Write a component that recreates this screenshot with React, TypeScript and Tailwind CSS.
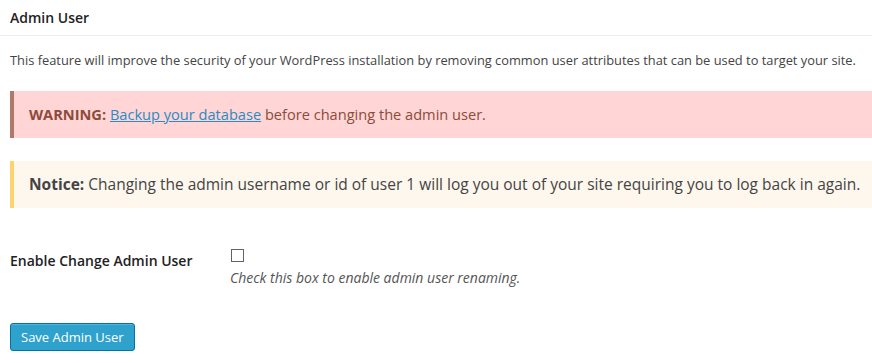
import React from "react";

const font = { fontFamily: '"Open Sans", "Liberation Sans", sans-serif' };

const App: React.FC = () => {
  return (
    <div className="w-[872px] h-[363px] bg-white text-[#444] overflow-hidden" style={font}>
      <div className="h-[36px] border-b border-[#eee] flex items-center px-[10px]">
        <h3 className="text-[14px] font-semibold text-[#222] leading-none pt-[1px]">Admin User</h3>
      </div>
      <p className="text-[12.85px] leading-[20px] px-[10px] mt-[14px] whitespace-nowrap">
        This feature will improve the security of your WordPress installation by removing common user attributes that can be used to target your site.
      </p>

      <div className="ml-[10px] mt-[21px] h-[47px] bg-[#ffd5d5] border-l-4 border-[#b07a6a] flex items-center pl-[15px]">
        <p className="text-[14.6px] text-[#8d4b3b]">
          <strong className="font-bold">WARNING:</strong>{" "}
          <a href="#" className="text-[#2a8bc4] underline">Backup your database</a>{" "}
          before changing the admin user.
        </p>
      </div>

      <div className="ml-[10px] mt-[23px] h-[47px] bg-[#fef7ed] border-l-4 border-[#fdd36f] flex items-center pl-[15px]">
        <p className="text-[15.5px] text-[#444] whitespace-nowrap">
          <strong className="font-bold">Notice:</strong> Changing the admin username or id of user 1 will log you out of your site requiring you to log back in again.
        </p>
      </div>

      <div className="flex px-[10px] mt-[40px]">
        <label className="w-[220px] text-[14px] font-semibold text-[#222] pt-[2px]">Enable Change Admin User</label>
        <div className="pt-[1px]">
          <span className="block w-[13px] h-[13px] border border-[#6b5a74] bg-white ml-[1px]" />
          <p className="text-[14px] italic text-[#555] mt-[5px]">Check this box to enable admin user renaming.</p>
        </div>
      </div>

      <div className="px-[10px] mt-[35px]">
        <button className="h-[28px] px-[10px] rounded-[3px] bg-[#2ea2cc] border border-[#0074a2] text-white text-[13px] leading-none shadow-[inset_0_1px_0_rgba(120,200,230,0.5)]">
          Save Admin User
        </button>
      </div>
    </div>
  );
};

export default App;
